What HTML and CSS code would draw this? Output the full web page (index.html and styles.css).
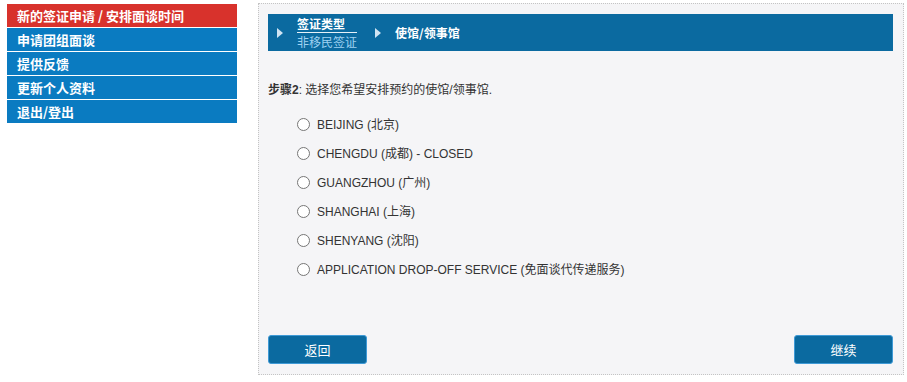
FILE: index.html
```html
<!DOCTYPE html>
<html lang="zh-CN">
<head>
<meta charset="utf-8">
<title>签证预约</title>
<link rel="stylesheet" href="styles.css">
</head>
<body>
<div class="page">
  <nav class="menu">
    <a class="menu-item active" href="#">新的签证申请 / 安排面谈时间</a>
    <a class="menu-item" href="#">申请团组面谈</a>
    <a class="menu-item" href="#">提供反馈</a>
    <a class="menu-item" href="#">更新个人资料</a>
    <a class="menu-item" href="#">退出/登出</a>
  </nav>
  <main class="panel">
    <div class="crumbs">
      <span class="arrow"></span>
      <div class="crumb-group">
        <span class="crumb-title">签证类型</span>
        <span class="crumb-sub">非移民签证</span>
      </div>
      <span class="arrow arrow-2"></span>
      <span class="crumb-current">使馆/领事馆</span>
    </div>
    <p class="step"><b>步骤2</b>: 选择您希望安排预约的使馆/领事馆.</p>
    <ul class="options">
      <li><label><input type="radio" name="post"><span>BEIJING (北京)</span></label></li>
      <li><label><input type="radio" name="post"><span>CHENGDU (成都) - CLOSED</span></label></li>
      <li><label><input type="radio" name="post"><span>GUANGZHOU (广州)</span></label></li>
      <li><label><input type="radio" name="post"><span>SHANGHAI (上海)</span></label></li>
      <li><label><input type="radio" name="post"><span>SHENYANG (沈阳)</span></label></li>
      <li><label><input type="radio" name="post"><span>APPLICATION DROP-OFF SERVICE (免面谈代传递服务)</span></label></li>
    </ul>
    <div class="actions">
      <button class="btn" type="button">返回</button>
      <button class="btn" type="button">继续</button>
    </div>
  </main>
</div>
</body>
</html>
```

FILE: styles.css
```css
* { box-sizing: border-box; }
html, body { margin: 0; padding: 0; background: #ffffff; }
body {
  font-family: "Liberation Sans", Arial, "Noto Sans CJK SC", sans-serif;
  font-size: 12px;
  color: #333333;
}
.page {
  display: flex;
  align-items: flex-start;
  padding: 3px 0 0 7px;
  gap: 21px;
}
.menu {
  width: 230px;
  margin-top: 1px;
  display: flex;
  flex-direction: column;
  gap: 1px;
}
.menu-item {
  display: block;
  height: 23px;
  line-height: 23px;
  padding-left: 10px;
  background: #0a7bc1;
  color: #ffffff;
  font-family: "Noto Sans CJK SC", sans-serif;
  font-weight: 700;
  font-size: 13px;
  text-decoration: none;
  white-space: nowrap;
}
.menu-item.active { background: #d8322c; }

.panel {
  width: 646px;
  height: 372px;
  border: 1px dotted #c4c4c4;
  background: #f5f5f7;
  padding: 10px 10px 10px 9px;
  display: flex;
  flex-direction: column;
}
.crumbs {
  height: 37px;
  background: #0b6aa0;
  display: flex;
  align-items: center;
  padding-left: 9px;
  font-family: "Noto Sans CJK SC", sans-serif;
  font-size: 12px;
}
.arrow {
  width: 0;
  height: 0;
  border-top: 5px solid transparent;
  border-bottom: 5px solid transparent;
  border-left: 6px solid #cfe4f3;
}
.crumb-group {
  display: flex;
  flex-direction: column;
  margin-left: 14px;
  padding-top: 1px;
}
.crumb-title {
  color: #ffffff;
  font-weight: 700;
  line-height: 15px;
  padding-bottom: 1px;
  border-bottom: 1px solid #e6f1f8;
}
.crumb-sub {
  color: #9fd2f2;
  line-height: 16px;
  padding-top: 1px;
}
.arrow-2 { margin-left: 18px; }
.crumb-current {
  margin-left: 14px;
  color: #ffffff;
  font-weight: 700;
  line-height: 16px;
}
.step {
  margin: 31px 0 0 0;
  line-height: 16px;
}
.step b { font-weight: 700; }
.options {
  list-style: none;
  margin: 12px 0 0 0;
  padding: 0 0 0 29px;
}
.options li {
  height: 29px;
  display: flex;
  align-items: center;
}
.options label {
  display: flex;
  align-items: center;
  gap: 7px;
  cursor: pointer;
}
.options input {
  appearance: none;
  -webkit-appearance: none;
  margin: 0;
  width: 13px;
  height: 13px;
  border: 1px solid #767676;
  border-radius: 50%;
  background: #ffffff;
}
.options span { line-height: 16px; }
.actions {
  margin-top: auto;
  display: flex;
  justify-content: space-between;
}
.btn {
  width: 99px;
  height: 29px;
  border: 1px solid #3f9ad6;
  border-radius: 3px;
  background: #0b6aa0;
  color: #ffffff;
  font-family: "Noto Sans CJK SC", sans-serif;
  font-size: 13px;
  padding: 0;
}
```
